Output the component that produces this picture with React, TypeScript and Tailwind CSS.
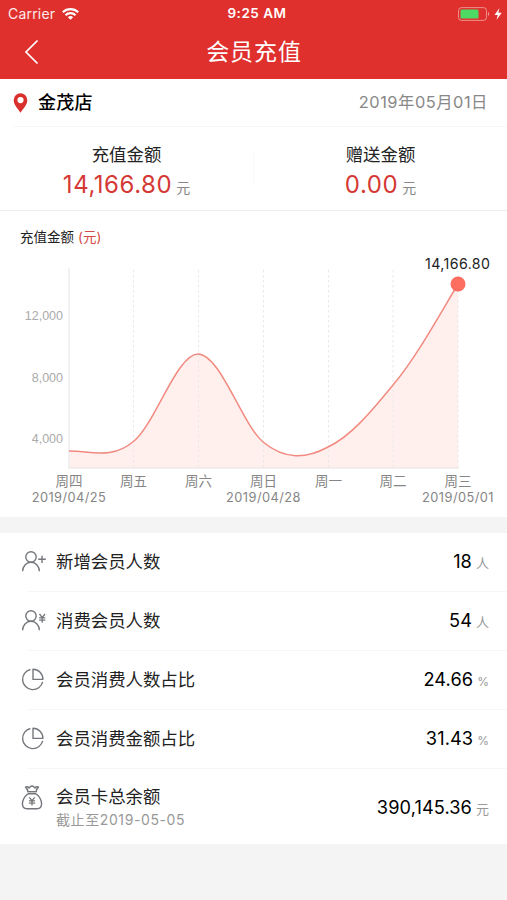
import { ReactNode } from "react";

const days = [
    { x: 69, label: "周四", date: "2019/04/25" },
    { x: 133.5, label: "周五" },
    { x: 198.5, label: "周六" },
    { x: 263.5, label: "周日", date: "2019/04/28" },
    { x: 328.5, label: "周一" },
    { x: 393, label: "周二" },
    { x: 458, label: "周三", date: "2019/05/01" },
];

const ticks = [
    { y: 320, label: "12,000" },
    { y: 381.5, label: "8,000" },
    { y: 442.5, label: "4,000" },
];

const curve =
    "M69 451C91 451 112 460 134 441C155 424 177 354 198 354C220 354 242 424 263 442C285 460 306 459 328 447C350 437 371 412 393 385C415 359 436 321 458 284";

const UserShape = () => (
    <>
        <circle cx="10" cy="7" r="5.2" />
        <path d="M1.600 21.200C1.800 16.300 5 12.300 10 12.300s8.200 4 8.400 8.900" />
    </>
);

const Icon = ({ children }: { children: ReactNode }) => (
    <svg
        className="h-6 w-6 overflow-visible"
        viewBox="0 0 24 24"
        fill="none"
        stroke="#74777b"
        strokeWidth="1.400"
        strokeLinejoin="round"
    >
        {children}
    </svg>
);

const UserPlusIcon = () => (
    <Icon>
        <UserShape />
        <path d="M17.200 9.300h7.600M21 5.700v7.200" />
    </Icon>
);

const UserYenIcon = () => (
    <Icon>
        <UserShape />
        <path d="M18.500 5l2.700 3.600L23.900 5M21.200 8.600v5.200M18.100 8.800h6.200M18.100 11.100h6.200" strokeWidth="1.300" />
    </Icon>
);

const PieIcon = () => (
    <Icon>
        <path d="M9.400 1.500A10.200 10.200 0 1 0 21.700 13.900" />
        <path d="M12 1.200v10.200h9.900A10 10 0 0 0 12 1.200z" />
    </Icon>
);

const BagIcon = () => (
    <Icon>
        <path d="M6.800 6.600C6.600 4.600 5.700 3 4.500 2.100c1.200-.8 2.600-.4 3.500 1C8.800 1.900 9.900 1 11 1s2.200.9 3 2.100c.9-1.400 2.300-1.800 3.500-1-1.200.9-2.100 2.500-2.300 4.500z" />
        <path d="M6.600 6.600h8.800M6.800 8.700h8.400" />
        <path d="M6.800 8.700C4 11.200 1.400 15.300 1.400 18.800c0 3.100 1.800 4.900 4.600 4.900h10c2.800 0 4.600-1.800 4.600-4.900 0-3.500-2.600-7.600-5.400-10.100" />
        <path d="M8.300 12.300l2.700 3.300 2.700-3.300M11 15.600v4.900M7.900 15.800h6.200M7.900 18.100h6.200" strokeWidth="1.300" />
    </Icon>
);

const rows = [
    { icon: <UserPlusIcon />, label: "新增会员人数", value: "18", unit: "人" },
    { icon: <UserYenIcon />, label: "消费会员人数", value: "54", unit: "人" },
    { icon: <PieIcon />, label: "会员消费人数占比", value: "24.66", unit: "%" },
    { icon: <PieIcon />, label: "会员消费金额占比", value: "31.43", unit: "%" },
    { icon: <BagIcon />, label: "会员卡总余额", value: "390,145.36", unit: "元", note: "截止至2019-05-05" },
];

const Header = () => (
    <header className="h-[79px] bg-[#df302d] text-white">
        {/* Status bar */}
        <div className="grid h-[27px] grid-cols-3 items-center pl-2 pr-[5px] text-sm leading-none">
            <div className="flex items-center gap-[7px]">
                <span className="tracking-[0.2px] text-white/90">Carrier</span>
                <svg className="h-3 w-[17px]" viewBox="0 0 17 12" fill="none" stroke="white" strokeWidth="2.100">
                    <path d="M.8 4.300a11 11 0 0 1 15.400 0M3.500 7.200a7 7 0 0 1 10 0" />
                    <path d="M8.500 11.800L5.800 9.200a3.900 3.900 0 0 1 5.400 0z" fill="white" stroke="none" />
                </svg>
            </div>
            <span className="whitespace-nowrap pl-1 pt-px text-center text-[13.5px] font-semibold tracking-[0.5px]">
                9:25 AM
            </span>
            <svg className="h-[14px] w-[44px] justify-self-end" viewBox="0 0 44 14" fill="none">
                <rect x=".5" y=".6" width="28" height="12.800" rx="3" stroke="white" strokeOpacity=".45" />
                <rect x="2.500" y="2.500" width="18" height="9" rx="1.200" fill="#4cd964" />
                <path d="M30 5v4c1.600-.5 1.600-3.500 0-4z" fill="white" fillOpacity=".5" />
                <path d="M41.500 1l-5 7h3.300l-1.300 5 5.200-7.200h-3.400z" fill="white" />
            </svg>
        </div>

        {/* Title */}
        <div className="grid h-[50px] grid-cols-[1fr_auto_1fr] items-center">
            <svg className="ml-6 h-[26px] w-[15px]" viewBox="0 0 15 26" fill="none" stroke="white" strokeWidth="1.700">
                <path d="M13.500 1.500L2 13l11.500 11.500" />
            </svg>
            <h1 className="pl-px text-[23px] leading-none tracking-[0.9px]">会员充值</h1>
        </div>
    </header>
);

const Stat = ({ label, value }: { label: string; value: string }) => (
    <div className="flex flex-1 flex-col items-center">
        <p className="text-[17.4px] leading-6 text-[#222]">{label}</p>
        <p className="mt-[2px] flex items-baseline gap-1 leading-8">
            <span className="text-2xl leading-8 tracking-[0.55px] text-[#d43935]">{value}</span>
            <span className="text-sm text-[#888]">元</span>
        </p>
    </div>
);

const Chart = () => (
    <svg className="block h-[257px] w-full" viewBox="0 252 507 257" fill="none">
        <path d={`${curve}V468H69Z`} fill="#fff0ee" />
        {days.slice(1).map((day) => (
            <path key={day.x} d={`M${day.x} 270V468`} stroke="#ebe8ea" strokeDasharray="2.500 2.500" />
        ))}
        <path d="M69 268V468" stroke="#eeeeee" strokeWidth="1.600" />
        <path d="M68 468H459" stroke="#e8e2e2" />
        <path d={curve} stroke="#f28a80" strokeWidth="1.500" />
        <circle cx="458" cy="284" r="7.500" fill="#fd6e60" />
        <text x="457.700" y="268.500" textAnchor="middle" fontSize="14.200" letterSpacing=".4" fill="#222">
            14,166.80
        </text>
        {ticks.map((tick) => (
            <text
                key={tick.label}
                x="63"
                y={tick.y}
                textAnchor="end"
                fontSize="12.500"
                fill="#aaa"
                className="font-['Liberation_Sans',sans-serif]"
            >
                {tick.label}
            </text>
        ))}
        {days.map((day) => (
            <g key={day.label} textAnchor="middle" fill="#858585">
                <text x={day.x} y="486" fontSize="13.500">{day.label}</text>
                {day.date && (
                    <text x={day.x} y="502" fontSize="12.800" letterSpacing=".45">{day.date}</text>
                )}
            </g>
        ))}
    </svg>
);

const App = () => {
    return (
        <div className="min-h-screen bg-[#f4f4f4] font-['Inter','Noto_Sans_CJK_SC',sans-serif] text-[#222]">
            <Header />

            <section className="h-[438px] bg-white">
                {/* Store and date */}
                <div className="ml-[13px] flex h-12 items-center border-b border-[#f6f6f6] pr-[19px]">
                    <svg className="h-5 w-[15px]" viewBox="0 0 14 20">
                        <path
                            d="M7 .3A6.800 6.800 0 0 0 .2 7.200C.2 11.600 4 15.200 7 19.700c3-4.500 6.800-8.100 6.800-12.500A6.800 6.800 0 0 0 7 .3zM7 4a3.100 3.100 0 1 1 0 6.200A3.100 3.100 0 0 1 7 4z"
                            fill="#da302d"
                        />
                    </svg>
                    <span className="ml-[10px] pt-px text-lg font-medium leading-none tracking-[0.3px] text-black">
                        金茂店
                    </span>
                    <span className="ml-auto text-[16.4px] leading-none tracking-[0.5px] text-[#888]">
                        2019年05月01日
                    </span>
                </div>

                {/* Totals */}
                <div className="flex h-[84px] border-b border-[#ececec] pt-4">
                    <Stat label="充值金额" value="14,166.80" />
                    <div className="mt-2 h-9 w-px bg-[#fafafa]" />
                    <Stat label="赠送金额" value="0.00" />
                </div>

                <h2 className="flex h-[41px] items-center pl-5 pt-3 text-[13.5px] leading-none">
                    充值金额<span className="ml-1 text-[#d64a47]">(元)</span>
                </h2>
                <Chart />
            </section>

            {/* Member figures */}
            <ul className="mt-4 bg-white">
                {rows.map((row) => (
                    <li
                        key={row.label}
                        className={
                            row.note
                                ? "ml-7 flex h-[75px] pr-[18px]"
                                : "ml-7 flex h-[59px] items-center border-b border-[#f6f6f6] pr-[18px]"
                        }
                    >
                        <div className={row.note ? "-ml-[7px] w-[35px] pt-4" : "-ml-[7px] w-[35px]"}>{row.icon}</div>
                        <div className="flex flex-1 items-center justify-between">
                            <div className={row.note ? "pt-[3px]" : ""}>
                                <p className="text-[17.4px] leading-6">{row.label}</p>
                                {row.note && (
                                    <p className="text-sm leading-[22px] tracking-[0.6px] text-[#999]">{row.note}</p>
                                )}
                            </div>
                            <p className={row.note ? "flex items-baseline gap-1 pt-0.5" : "flex items-baseline gap-1"}>
                                <span className="text-[18.2px] tracking-[0.1px] text-black">{row.value}</span>
                                <span className={row.unit === "%" ? "text-xs text-[#999]" : "text-[13px] text-[#999]"}>
                                    {row.unit}
                                </span>
                            </p>
                        </div>
                    </li>
                ))}
            </ul>
        </div>
    );
};

export default App;
